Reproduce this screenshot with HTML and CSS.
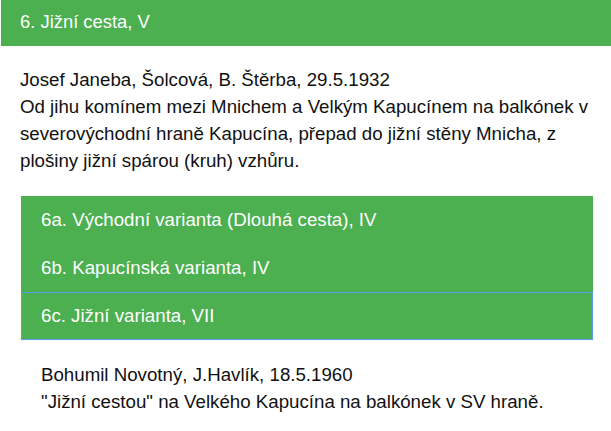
FILE: index.html
```html
<!DOCTYPE html>
<html lang="cs">
<head>
<meta charset="utf-8">
<link rel="stylesheet" href="styles.css">
</head>
<body>
<div class="route">
  <div class="route-head">6. Jižní cesta, V</div>
  <div class="route-body">
    <p class="desc">Josef Janeba, Šolcová, B. Štěrba, 29.5.1932<br>Od jihu komínem mezi Mnichem a Velkým Kapucínem na balkónek v severovýchodní hraně Kapucína, přepad do jižní stěny Mnicha, z plošiny jižní spárou (kruh) vzhůru.</p>
    <ul class="variants">
      <li class="variant">6a. Východní varianta (Dlouhá cesta), IV</li>
      <li class="variant">6b. Kapucínská varianta, IV</li>
      <li class="variant active">6c. Jižní varianta, VII</li>
    </ul>
    <p class="desc sub">Bohumil Novotný, J.Havlík, 18.5.1960<br>"Jižní cestou" na Velkého Kapucína na balkónek v SV hraně.</p>
  </div>
</div>
</body>
</html>
```
FILE: styles.css
```css
html, body {
  margin: 0;
  padding: 0;
  background: #fff;
}
body {
  font-family: "Liberation Sans", Arial, sans-serif;
  color: #111;
}
.route-head {
  margin-left: 1px;
  height: 46px;
  line-height: 44px;
  padding: 0 19px;
  background: #4caf50;
  color: #fff;
  font-size: 18.4px;
}
.route-body {
  padding: 20px 18px 0 20px;
}
.desc {
  margin: 0;
  font-size: 18.7px;
  line-height: 27px;
}
.variants {
  list-style: none;
  margin: 22px 0 0 1px;
  padding: 0;
}
.variant {
  height: 48px;
  line-height: 46px;
  padding: 0 19px;
  background: #4caf50;
  color: #fff;
  font-size: 18.7px;
  border: 1px solid #4caf50;
  box-sizing: border-box;
}
.variant.active {
  border-color: #5b9de6;
}
.sub {
  margin-top: 21px;
  padding-left: 21px;
}
```
